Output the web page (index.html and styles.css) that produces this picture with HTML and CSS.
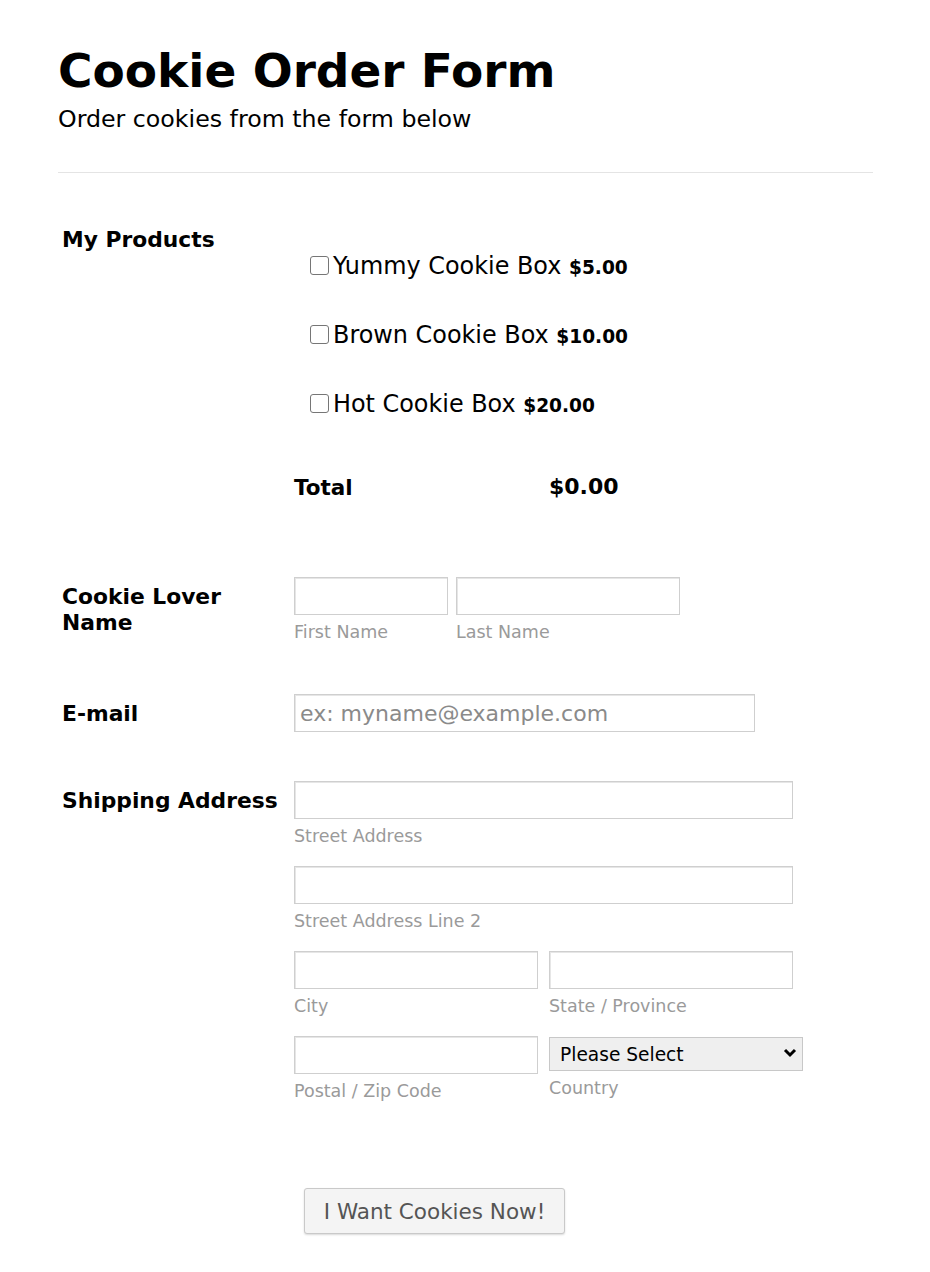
FILE: index.html
```html
<!DOCTYPE html>
<html lang="en">
<head>
    <meta charset="UTF-8">
    <meta name="viewport" content="width=device-width, initial-scale=1.0">
    <title>Cookie Order Form</title>
    <link rel="stylesheet" href="styles.css">
</head>
<body>
    <div class="page">
        <div class="header">
            <h1>Cookie Order Form</h1>
            <div class="subtitle">Order cookies from the form below</div>
        </div>

        <form class="order-form" onsubmit="return false;">
            <div class="row row-products">
                <div class="row-label">My Products</div>
                <div class="row-field">
                    <label class="product">
                        <input type="checkbox" data-price="5">
                        <span>Yummy Cookie Box <b class="price">$5.00</b></span>
                    </label>
                    <label class="product">
                        <input type="checkbox" data-price="10">
                        <span>Brown Cookie Box <b class="price">$10.00</b></span>
                    </label>
                    <label class="product">
                        <input type="checkbox" data-price="20">
                        <span>Hot Cookie Box <b class="price">$20.00</b></span>
                    </label>
                    <div class="total">
                        <span class="total-label">Total</span>
                        <span class="total-value" id="total">$0.00</span>
                    </div>
                </div>
            </div>

            <div class="row row-name">
                <div class="row-label">Cookie Lover<br>Name</div>
                <div class="row-field field-line">
                    <div class="sub">
                        <input type="text" class="input w-first">
                        <div class="sub-label">First Name</div>
                    </div>
                    <div class="sub">
                        <input type="text" class="input w-last">
                        <div class="sub-label">Last Name</div>
                    </div>
                </div>
            </div>

            <div class="row row-email">
                <div class="row-label">E-mail</div>
                <div class="row-field">
                    <input type="email" class="input w-email" placeholder="ex: myname@example.com">
                </div>
            </div>

            <div class="row row-address">
                <div class="row-label">Shipping Address</div>
                <div class="row-field address-grid">
                    <div class="sub span-2">
                        <input type="text" class="input w-full">
                        <div class="sub-label">Street Address</div>
                    </div>
                    <div class="sub span-2">
                        <input type="text" class="input w-full">
                        <div class="sub-label">Street Address Line 2</div>
                    </div>
                    <div class="sub">
                        <input type="text" class="input w-half">
                        <div class="sub-label">City</div>
                    </div>
                    <div class="sub">
                        <input type="text" class="input w-half">
                        <div class="sub-label">State / Province</div>
                    </div>
                    <div class="sub">
                        <input type="text" class="input w-half">
                        <div class="sub-label">Postal / Zip Code</div>
                    </div>
                    <div class="sub">
                        <div class="select-wrap">
                            <select class="country">
                                <option>Please Select</option>
                                <option>United States</option>
                                <option>Canada</option>
                                <option>United Kingdom</option>
                            </select>
                            <svg class="chevron" width="14" height="10" viewBox="0 0 14 10">
                                <path d="M2 2 L7 7 L12 2" fill="none" stroke="#000" stroke-width="3"/>
                            </svg>
                        </div>
                        <div class="sub-label">Country</div>
                    </div>
                </div>
            </div>

            <div class="submit-row">
                <button type="submit" class="submit">I Want Cookies Now!</button>
            </div>
        </form>
    </div>

    <script>
        // Recalculate the total whenever a product is ticked
        const boxes = document.querySelectorAll('.product input[type="checkbox"]');
        boxes.forEach(box => {
            box.addEventListener('change', () => {
                let sum = 0;
                boxes.forEach(b => {
                    if (b.checked) sum += Number(b.dataset.price);
                });
                document.getElementById('total').textContent = '$' + sum.toFixed(2);
            });
        });
    </script>
</body>
</html>
```

FILE: styles.css
```css
body {
    margin: 0;
    font-family: "DejaVu Sans", Verdana, sans-serif;
    color: #000;
    background: #fff;
}
.page {
    width: 815px;
    padding: 43px 0 40px 58px;
}
.header {
    padding-bottom: 39px;
    border-bottom: 1px solid #e4e4e4;
}
h1 {
    margin: 0;
    font-size: 47px;
    line-height: 56px;
    font-weight: bold;
}
.subtitle {
    margin-top: 6px;
    font-size: 23.7px;
    line-height: 28px;
}
.order-form {
    padding-top: 54px;
}
.row {
    display: flex;
    margin-bottom: 52px;
}
.row-label {
    width: 232px;
    padding-left: 4px;
    flex-shrink: 0;
    font-size: 21.8px;
    font-weight: bold;
    line-height: 26px;
}
.row-name .row-label,
.row-email .row-label,
.row-address .row-label {
    padding-top: 7px;
}
.row-field {
    flex: 1;
}

/* products */
.row-products {
    margin-bottom: 71px;
}
.row-products .row-field {
    padding-top: 4px;
}
.product {
    display: flex;
    align-items: center;
    height: 69px;
    padding-left: 16px;
    font-size: 23.9px;
    cursor: pointer;
}
.product input[type="checkbox"] {
    appearance: none;
    -webkit-appearance: none;
    width: 19px;
    height: 19px;
    margin: 0 4px 0 0;
    border: 1px solid #767676;
    border-radius: 3px;
    background: #fff;
}
.product input[type="checkbox"]:checked {
    background: #0075ff;
    border-color: #0075ff;
}
.price {
    font-size: 18.6px;
}
.total {
    display: flex;
    align-items: center;
    height: 40px;
    margin-top: 28px;
    font-weight: bold;
}
.total-label {
    width: 255px;
    font-size: 21.5px;
    padding-top: 3px;
}
.total-value {
    font-size: 22px;
}

/* inputs */
.input {
    box-sizing: border-box;
    height: 38px;
    margin: 0;
    padding: 0 5px;
    border: 1px solid #cfcfcf;
    box-shadow: inset 1px 1px 0 #e6e6e6;
    font-family: inherit;
    font-size: 22px;
    background: #fff;
}
.input::placeholder {
    color: #8a8a8a;
}
.w-first { width: 154px; }
.w-last { width: 224px; }
.w-email { width: 461px; }
.w-full { width: 499px; }
.w-half { width: 244px; }

.field-line {
    display: flex;
    gap: 8px;
}
.sub {
    display: flex;
    flex-direction: column;
}
.sub-label {
    margin-top: 7px;
    font-size: 17.5px;
    line-height: 20px;
    color: #9a9a9a;
}
.row-email {
    margin-bottom: 49px;
}
.address-grid {
    display: grid;
    grid-template-columns: 244px 253px;
    column-gap: 11px;
    row-gap: 20px;
    align-content: start;
}
.span-2 {
    grid-column: span 2;
}
.select-wrap {
    position: relative;
    width: 254px;
    margin-top: 1px;
}
.country {
    box-sizing: border-box;
    width: 254px;
    height: 34px;
    margin: 0;
    padding: 0 6px 0 10px;
    border: 1px solid #c8c8c8;
    background: #efefef;
    font-family: inherit;
    font-size: 18.6px;
    color: #000;
    border-radius: 0;
    appearance: none;
    -webkit-appearance: none;
}
.chevron {
    position: absolute;
    right: 6px;
    top: 11px;
    pointer-events: none;
}
.select-wrap + .sub-label {
    margin-top: 7px;
}
.row-address {
    margin-bottom: 87px;
}

/* submit */
.submit-row {
    padding-left: 246px;
}
.submit {
    width: 261px;
    height: 46px;
    border: 1px solid #c9c9c9;
    border-radius: 3px;
    background: #f4f4f4;
    box-shadow: 0 1px 2px rgba(0, 0, 0, 0.15);
    font-family: inherit;
    font-size: 21.5px;
    color: #555;
    cursor: pointer;
}
```
